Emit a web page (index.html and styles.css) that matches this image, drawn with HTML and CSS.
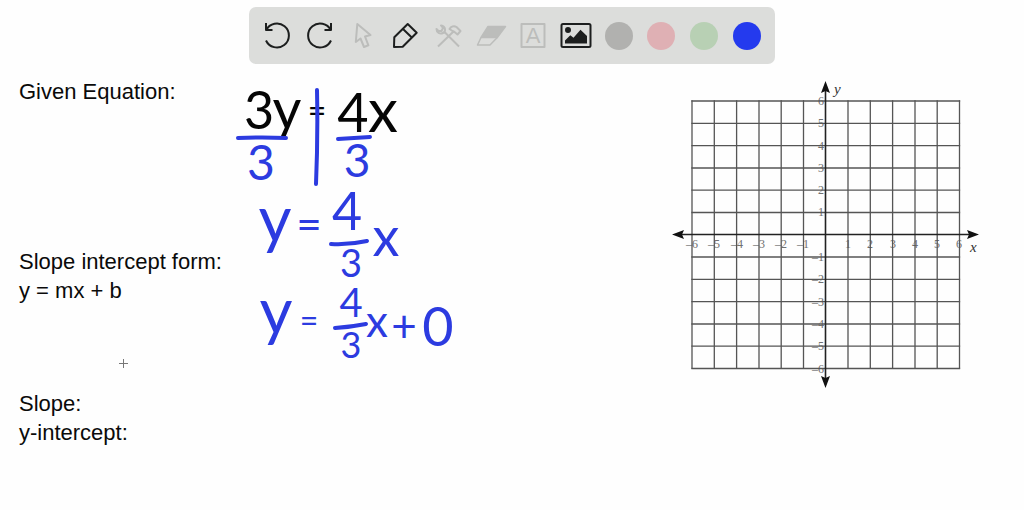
FILE: index.html
```html
<!DOCTYPE html>
<html lang="en">
<head>
    <meta charset="UTF-8">
    <meta name="viewport" content="width=device-width, initial-scale=1.0">
    <title>Whiteboard - Slope Intercept Form</title>
    <link rel="stylesheet" href="styles.css">
</head>
<body>

    <div class="toolbar" role="toolbar" aria-label="Drawing tools">
        <button class="tool" aria-label="Undo">
            <svg class="icon" viewBox="0 0 28 28"><path d="M3 1.5V8.5H9.5M3.2 8.5A12 12 0 1 1 3 19"/></svg>
        </button>
        <button class="tool" aria-label="Redo">
            <svg class="icon" viewBox="0 0 28 28"><path d="M25 1.5V8.5H18.5M24.8 8.5A12 12 0 1 0 25 19"/></svg>
        </button>
        <button class="tool muted" aria-label="Select">
            <svg class="icon" viewBox="0 0 28 28"><path d="M8.3 2.5L21.5 13.5L16 15L19.4 23.8L15 25.5L11.5 17L6.8 20.5Z"/></svg>
        </button>
        <button class="tool" aria-label="Pen">
            <svg class="icon" viewBox="0 0 28 28"><path d="M3 25.5L3.3 15.8L16.7 2.5L25.7 11.2L11.7 25.2ZM12 7.5L20.8 16"/></svg>
        </button>
        <button class="tool muted" aria-label="Tools">
            <svg class="icon" viewBox="0 0 28 28">
                <path d="M7 4L9 6.500L7.500 9.500L4.500 9.500L2.500 7.500C2.500 11 6 13 9 11.500C12 10 12 5 7 4ZM10.500 10.500L25 25"/>
                <path d="M15.500 7.500C17 5 20 4 22.500 5.500L26.500 9.500L23.500 13L20.500 10.500L18.500 9.500ZM19.500 10L4 25"/>
            </svg>
        </button>
        <button class="tool muted" aria-label="Eraser">
            <svg class="icon thin" viewBox="0 0 28 28">
                <path class="solid" d="M11 5H28.500L20.300 16H4Z"/>
                <path d="M4 16L0.500 23.500H13L20.300 16"/>
            </svg>
        </button>
        <button class="tool muted" aria-label="Text">
            <svg class="icon" viewBox="0 0 28 28">
                <rect x="2.500" y="2.500" width="23" height="23"/>
                <text class="icon-letter" x="14" y="21">A</text>
            </svg>
        </button>
        <button class="tool" aria-label="Image">
            <svg class="icon" viewBox="0 0 28 28">
                <rect x="-0.500" y="2.500" width="29" height="23" rx="1.500"/>
                <circle class="solid" cx="6" cy="8.500" r="2"/>
                <path class="fill-only" d="M3 22V19L8.300 13.800L11.500 16.200L18.500 8.200L25 14.500V22Z"/>
            </svg>
        </button>
        <button class="tool" aria-label="Gray"><span class="swatch gray"></span></button>
        <button class="tool" aria-label="Pink"><span class="swatch pink"></span></button>
        <button class="tool" aria-label="Green"><span class="swatch green"></span></button>
        <button class="tool" aria-label="Blue"><span class="swatch blue"></span></button>
    </div>

    <main class="board">
        <section class="notes">
            <p>Given Equation:</p>
            <p class="form">Slope intercept form:<br>y = mx + b</p>
            <p class="answers">Slope:<br>y-intercept:</p>
            <svg class="crosshair" viewBox="0 0 9 9"><path d="M4.500 0V9M0 4.500H9"/></svg>
        </section>

        <svg class="ink" viewBox="0 0 220 290" role="img" aria-label="Worked equations">
            <!-- 3y = 4x, both sides over 3 -->
            <g class="pen-black">
                <text x="23" y="52" font-size="52">3</text>
                <text x="51" y="52" font-size="56">y</text>
                <text x="81" y="45" font-size="32">=</text>
                <text x="117" y="55" font-size="54">4</text>
                <text x="147" y="55" font-size="60">x</text>
            </g>
            <g class="pen-blue">
                <path d="M2 61Q26 60 50 61M102 62L134 60M81 13Q82 60 80 107"/>
                <text x="25" y="103" font-size="48">3</text>
                <text x="121" y="100" font-size="46">3</text>

                <!-- y = 4/3 x -->
                <text x="39" y="165" font-size="64">y</text>
                <text x="73" y="163" font-size="44">=</text>
                <text x="111" y="153" font-size="52">4</text>
                <path d="M95 167Q113 168 131 164"/>
                <text x="115" y="200" font-size="38">3</text>
                <text x="150" y="179" font-size="54">x</text>

                <!-- y = 4/3 x + 0 -->
                <text x="40" y="257" font-size="64">y</text>
                <text x="73" y="255" font-size="32">=</text>
                <text x="115" y="240" font-size="40">4</text>
                <path d="M99 251Q115 250 130 247"/>
                <text x="115" y="281" font-size="36">3</text>
                <text x="141" y="260" font-size="44">x</text>
                <text x="168" y="265" font-size="44">+</text>
                <text x="202" y="269" font-size="54">0</text>
            </g>
        </svg>

        <svg class="graph" viewBox="0 0 308 312" role="img" aria-label="Empty coordinate plane from -6 to 6">
            <g class="labels">
                <g class="x-labels">
                    <text x="20" y="171">–6</text>
                    <text x="42" y="171">–5</text>
                    <text x="65" y="171">–4</text>
                    <text x="87" y="171">–3</text>
                    <text x="109" y="171">–2</text>
                    <text x="131" y="171">–1</text>
                    <text x="176" y="171">1</text>
                    <text x="198" y="171">2</text>
                    <text x="221" y="171">3</text>
                    <text x="243" y="171">4</text>
                    <text x="265" y="171">5</text>
                    <text x="287" y="171">6</text>
                </g>
                <g class="y-labels">
                    <text x="152" y="28">6</text>
                    <text x="152" y="50">5</text>
                    <text x="152" y="73">4</text>
                    <text x="152" y="95">3</text>
                    <text x="152" y="117">2</text>
                    <text x="152" y="139">1</text>
                    <text x="152" y="184">–1</text>
                    <text x="152" y="206">–2</text>
                    <text x="152" y="229">–3</text>
                    <text x="152" y="251">–4</text>
                    <text x="152" y="273">–5</text>
                    <text x="152" y="296">–6</text>
                </g>
            </g>
            <path class="grid" d="M20 24V291M42.300 24V291M64.600 24V291M87 24V291M109.200 24V291M131.500 24V291M176 24V291M198.300 24V291M220.600 24V291M243 24V291M265.200 24V291M287.500 24V291"/>
            <path class="grid" d="M20 24H287.500M20 46.300H287.500M20 68.600H287.500M20 91H287.500M20 113.200H287.500M20 135.500H287.500M20 180H287.500M20 202.300H287.500M20 224.600H287.500M20 247H287.500M20 269.200H287.500M20 291.500H287.500"/>
            <path class="axis" d="M8 157.500H300M153.500 12V303"/>
            <path class="arrows" d="M153.500 4L158 16L153.500 14L149 16ZM153.500 311L158 299L153.500 301L149 299ZM0 157.500L12 153L10 157.500L12 162ZM307 157.500L295 153L297 157.500L295 162Z"/>
            <text class="axis-name" x="162" y="17">y</text>
            <text class="axis-name" x="298" y="175">x</text>
        </svg>
    </main>

</body>
</html>
```
FILE: styles.css
```css
* {
    box-sizing: border-box;
}
body {
    margin: 0;
    padding-top: 7px;
    background-color: #fefefe;
    color: #0a0a0a;
    font-family: "Liberation Sans", Arial, sans-serif;
}

/* Toolbar */
.toolbar {
    display: grid;
    grid-template-columns: repeat(12, 1fr);
    align-items: center;
    max-width: 526px;
    margin: 0 auto;
    padding: 14px 7px;
    background-color: #dcdddb;
    border-radius: 7px;
}
.tool {
    display: flex;
    justify-content: center;
    padding: 0;
    border: 0;
    background: none;
    color: #1c1e1e;
    cursor: pointer;
}
.muted {
    color: #bcbdbb;
}
.icon {
    width: 28px;
    height: 29px;
    overflow: visible;
    fill: none;
    stroke: currentColor;
    stroke-width: 2;
    stroke-linejoin: round;
}
.thin {
    stroke-width: 1.5;
}
.solid {
    fill: currentColor;
}
.fill-only {
    fill: currentColor;
    stroke: none;
}
.icon-letter {
    fill: currentColor;
    stroke: none;
    font-family: "Liberation Sans", Arial, sans-serif;
    font-size: 22px;
    text-anchor: middle;
}
.swatch {
    width: 28px;
    height: 28px;
    border-radius: 50%;
}
.gray {
    background-color: #b1b1af;
}
.pink {
    background-color: #dfb0b4;
}
.green {
    background-color: #b8d0b4;
}
.blue {
    background-color: #243aee;
}

/* Board */
.board {
    display: flex;
    align-items: flex-start;
    padding: 13px 44px 0 19px;
}
.notes {
    position: relative;
    flex: 0 0 217px;
    font-size: 22px;
    line-height: 29px;
    white-space: nowrap;
}
.notes p {
    margin: 0;
}
.notes .form {
    margin-top: 141px;
}
.notes .answers {
    margin-top: 84px;
}
.crosshair {
    position: absolute;
    left: 100px;
    top: 282px;
    width: 9px;
    height: 9px;
    stroke: #777;
}

/* Pen strokes */
.ink {
    flex: 0 1 220px;
    min-width: 0;
    overflow: visible;
    font-family: Lato, sans-serif;
    text-anchor: middle;
}
.pen-black {
    fill: #050505;
}
.pen-blue {
    fill: #2c3be0;
}
.pen-blue path {
    fill: none;
    stroke: #2c3be0;
    stroke-width: 4;
    stroke-linecap: round;
}

/* Coordinate plane */
.graph {
    flex: 0 1 308px;
    min-width: 0;
    margin-left: auto;
    font-family: "Liberation Serif", "Times New Roman", serif;
}
.labels {
    fill: #707070;
    font-size: 12px;
}
.x-labels {
    text-anchor: middle;
}
.y-labels {
    text-anchor: end;
}
.grid {
    stroke: #555;
    stroke-width: 1.3;
    stroke-linecap: square;
}
.axis {
    stroke: #222;
    stroke-width: 1.6;
}
.arrows {
    fill: #111;
}
.axis-name {
    fill: #333;
    font-size: 15px;
    font-style: italic;
}
```
